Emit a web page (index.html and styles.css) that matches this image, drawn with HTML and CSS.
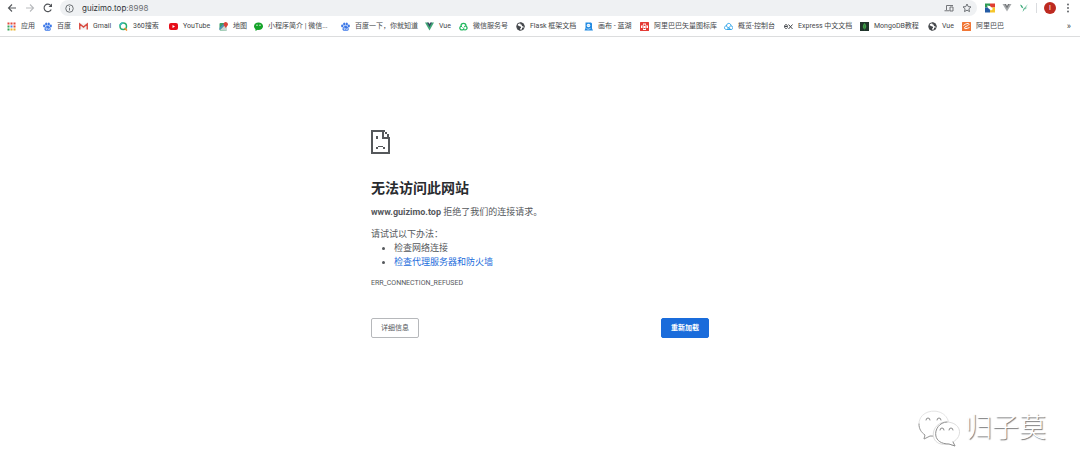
FILE: index.html
```html
<!DOCTYPE html>
<html lang="zh-CN">
<head>
<meta charset="utf-8">
<title>guizimo.top</title>
<link rel="stylesheet" href="styles.css">
</head>
<body>
<svg class="defs" aria-hidden="true">
  <symbol id="paw" viewBox="0 0 18 18"><g fill="#3c78e8"><ellipse cx="6.500" cy="4" rx="2.300" ry="3.200"/><ellipse cx="11.500" cy="4" rx="2.300" ry="3.200"/><ellipse cx="2.500" cy="8" rx="2.300" ry="2.800"/><ellipse cx="15.500" cy="8" rx="2.300" ry="2.800"/><path d="M9 7c2 0 3.500 2 5.500 4.500s1 6-2 6c-2 0-4-.5-6 0-3 .5-5-3.500-2.500-6S7 7 9 7z"/></g><path d="M6 12h2v3H6zM10 12v3h3v-3" fill="none" stroke="#fff"/></symbol>
  <symbol id="vue" viewBox="0 0 18 18"><path d="M0 1h5l4 7 4-7h5L9 17z" fill="#41a878"/><path d="M4 1h3.500L9 4l1.500-3H14L9 10z" fill="#34495e"/></symbol>
  <symbol id="globe" viewBox="0 0 18 18"><circle cx="9" cy="9" r="7.600" fill="#fff" stroke="#44474b" stroke-width="2"/><path d="M2 6c4 1 4 3 7 3 2 1 1 4-1 4l1 4C4 17 1 12 2 6zM8 1c1 3 0 4 3 4l1 3 5 2c0-5-4-9-9-9zM12 11l4 1-4 4z" fill="#44474b"/></symbol>
</svg>
<header class="browser">
  <div class="toolbar">
    <nav class="nav" aria-label="导航">
      <button class="tool" aria-label="后退"><svg viewBox="0 0 20 20"><path d="M18 10H3M10 3l-7 7 7 7" fill="none" stroke="#55585c" stroke-width="2.200"/></svg></button>
      <button class="tool" aria-label="前进"><svg viewBox="0 0 20 20"><path d="M2 10h15M10 3l7 7-7 7" fill="none" stroke="#b9bbbe" stroke-width="2.200"/></svg></button>
      <button class="tool" aria-label="刷新"><svg viewBox="0 0 20 20"><path d="M16.500 13A7.500 7.500 0 1 1 15.500 5" fill="none" stroke="#505357" stroke-width="2.200"/><path d="M18 1v7h-7z" fill="#505357"/></svg></button>
    </nav>
    <div class="omnibox">
      <svg class="info" viewBox="0 0 18 18"><circle cx="9" cy="9" r="7.500" fill="none" stroke="#5f6368" stroke-width="1.800"/><path d="M9 8v5M9 4.500v2" stroke="#5f6368" stroke-width="1.800"/></svg>
      <div class="url">guizimo.top<span class="port">:8998</span></div>
      <button class="tool" aria-label="发送到设备"><svg viewBox="0 0 20 20"><path d="M5 14V5h13M1 15.500h10M12 8h6v8h-6z" fill="none" stroke="#65686c" stroke-width="1.800"/></svg></button>
      <button class="tool" aria-label="收藏"><svg viewBox="0 0 20 20"><path d="M10 2l2.400 5.200 5.600.6-4.200 3.800 1.200 5.600-5-2.900-5 2.900 1.200-5.600L2 7.800l5.600-.6z" fill="none" stroke="#5f6368" stroke-width="1.800"/></svg></button>
    </div>
    <div class="extensions">
      <button class="tool" aria-label="扩展程序"><svg viewBox="0 0 20 20"><path d="M0 1h10v8H0z" fill="#2d9a52"/><path d="M10 1h10v8H10z" fill="#df3c32"/><path d="M0 9h10v10H0z" fill="#245ba5"/><path d="M10 9h10v10H10z" fill="#f5c52b"/><path d="M4 5l6 1 6 6-4 3-6-5z" fill="#fff"/></svg></button>
      <button class="tool" aria-label="Vue 工具"><svg viewBox="0 0 20 20"><path d="M1 2h5l4 7 4-7h5l-9 15z" fill="#a8abad"/><path d="M5 2h3l2 4 2-4h3l-5 9z" fill="#707376"/></svg></button>
      <button class="tool" aria-label="助手"><svg viewBox="0 0 20 20"><path d="M2 3l4 2 3 6-4-2zM18 2l-8 12-3 4 2-6z" fill="#35a675"/><path d="M11 10l6-1-5 4z" fill="#80caaa"/></svg></button>
      <span class="divider"></span>
      <button class="avatar" aria-label="账户">I</button>
      <button class="tool" aria-label="菜单"><svg viewBox="0 0 20 20"><g fill="#55585c"><circle cx="10" cy="3" r="1.800"/><circle cx="10" cy="10" r="1.800"/><circle cx="10" cy="17" r="1.800"/></g></svg></button>
    </div>
  </div>
  <nav class="bookmarks" aria-label="书签">
    <a class="bookmark" href="#"><svg viewBox="0 0 18 18"><path d="M1 1h4v4H1zM7 1h4v4H7zM13 1h4v4h-4z" fill="#e3483c"/><path d="M1 7h4v4H1z" fill="#3ba45a"/><path d="M7 7h4v4H7z" fill="#4485ee"/><path d="M13 7h4v4h-4z" fill="#e3483c"/><path d="M1 13h4v4H1z" fill="#3ba45a"/><path d="M7 13h4v4H7zM13 13h4v4h-4z" fill="#eab42c"/></svg>应用</a>
    <a class="bookmark" href="#"><svg><use href="#paw"/></svg>百度</a>
    <a class="bookmark" href="#"><svg viewBox="0 0 18 18"><path d="M1 3h16v12H1z" fill="#f1f1f1"/><path d="M1.500 15V4L9 10l7.500-6v11" fill="none" stroke="#d94a40" stroke-width="2.800"/></svg>Gmail</a>
    <a class="bookmark" href="#"><svg viewBox="0 0 18 18"><circle cx="8.500" cy="8.500" r="6.500" fill="none" stroke="#29ad70" stroke-width="3"/><path d="M2 8a6.500 6.500 0 0 1 6-6" fill="none" stroke="#40b9bd" stroke-width="3"/><path d="M11 12l5 5" stroke="#f28c28" stroke-width="3"/></svg>360搜索</a>
    <a class="bookmark" href="#"><svg viewBox="0 0 18 18"><rect y="2" width="18" height="14" rx="4" fill="#e60e19"/><path d="M7 6v6l5-3z" fill="#fff"/></svg>YouTube</a>
    <a class="bookmark" href="#"><svg viewBox="0 0 18 18"><rect x="1" y="2" width="15" height="15" rx="2" fill="#3a9d67"/><path d="M2 16L13 5l3 3v9z" fill="#c9d5d3"/><path d="M1 12l8-8 2 2L1 16z" fill="#548bc8"/><path d="M13 0c3 0 5 2 5 5 0 2-3 4-4.500 7C12 9 9 7 9 5c0-3 2-5 4-5z" fill="#db4439"/></svg>地图</a>
    <a class="bookmark" href="#"><svg viewBox="0 0 18 18"><ellipse cx="9" cy="8.500" rx="9" ry="7.500" fill="#14a329"/><path d="M3 13v5l5-3z" fill="#14a329"/><circle cx="6" cy="6.500" r="1.300" fill="#fff"/><circle cx="12" cy="6.500" r="1.300" fill="#fff"/></svg>小程序简介 | 微信...</a>
    <a class="bookmark" href="#"><svg><use href="#paw"/></svg>百度一下，你就知道</a>
    <a class="bookmark" href="#"><svg><use href="#vue"/></svg>Vue</a>
    <a class="bookmark" href="#"><svg viewBox="0 0 18 18"><path d="M4 8c0-7 10-7 10 0M14 8c5 5 0 9-5 7M9 15c-6 3-10-3-5-7" fill="none" stroke="#24b860" stroke-width="2.500"/><path d="M4 8l3 3M14 8l-4 1M9 15l1-4" stroke="#24b860" stroke-width="2"/></svg>微信服务号</a>
    <a class="bookmark" href="#"><svg><use href="#globe"/></svg>Flask 框架文档</a>
    <a class="bookmark" href="#"><svg viewBox="0 0 18 18"><path d="M3 1h11l2 2v10l2 4H1l2-5z" fill="#238be2"/><circle cx="9" cy="7" r="3.500" fill="#fff"/><path d="M7 7h4M5 13c3 2 6 2 8-1" fill="none" stroke="#b6dcfa" stroke-width="2"/></svg>画布 - 蓝湖</a>
    <a class="bookmark" href="#"><svg viewBox="0 0 18 18"><rect width="18" height="18" rx="1" fill="#e43b36"/><path d="M6 3h6v4h4v5h-4v4H6v-4H2V7h4z" fill="#fff"/><path d="M7 5h4v3H7zM4 9h3v2H4zM11 9h3v2h-3zM7 12h4v2H7z" fill="#e43b36"/></svg>阿里巴巴矢量图标库</a>
    <a class="bookmark" href="#"><svg viewBox="0 0 18 18"><path d="M5 15C-1 15 0 7 5 8c0-7 9-7 9 0 5 0 5 7 0 7zM5 9l8 5M7 14l6-6" fill="none" stroke="#32a5e9" stroke-width="2"/></svg>概览-控制台</a>
    <a class="bookmark" href="#"><svg viewBox="0 0 18 18"><path d="M1 9h6c0-5-6-5-6 0s5 5 6 2M9 5l8 9M17 5l-8 9" fill="none" stroke="#44474b" stroke-width="2"/></svg>Express 中文文档</a>
    <a class="bookmark" href="#"><svg viewBox="0 0 18 18"><path d="M0 0h18v18H0z" fill="#20342b"/><path d="M9 2c6 6 3 11 0 13-4-3-5-7 0-13z" fill="#3f9d46"/><path d="M9 6v11" stroke="#276c35"/></svg>MongoDB教程</a>
    <a class="bookmark" href="#"><svg><use href="#globe"/></svg>Vue</a>
    <a class="bookmark" href="#"><svg viewBox="0 0 18 18"><rect width="18" height="18" rx="1" fill="#f17736"/><path d="M3 7c5-5 12-5 11-2-1 2-5 3-8 5-3 3 0 5 9 1" fill="none" stroke="#fff" stroke-width="2"/></svg>阿里巴巴</a>
    <button class="more" aria-label="更多书签">»</button>
  </nav>
</header>
<main class="error">
  <svg class="sad" viewBox="0 0 19 24" shape-rendering="crispEdges"><path d="M0 0h14v2H2v20h15V9h-6V2h2v5h6v17H0zM14 2h2v2h-2zM16 4h2v3h-2zM5 6h2v3H5zM7 16h5v1H7zM5 17h2v2H5zM12 17h2v2h-2z" fill="#55585b"/></svg>
  <h1 class="title">无法访问此网站</h1>
  <p class="summary"><strong>www.guizimo.top</strong> 拒绝了我们的连接请求。</p>
  <p class="hint">请试试以下办法：</p>
  <ul class="suggestions">
    <li>检查网络连接</li>
    <li><a class="link" href="#">检查代理服务器和防火墙</a></li>
  </ul>
  <p class="code">ERR_CONNECTION_REFUSED</p>
  <div class="actions">
    <button class="button">详细信息</button>
    <button class="button primary">重新加载</button>
  </div>
</main>
<div class="watermark">
  <svg viewBox="0 0 44 38"><g fill="#fff" stroke-linecap="round"><path d="M8 26l-1 4 6-3c16 2 19-5 19-10C32-3 2-2 2 15c0 5 2 8 6 11z" stroke="#e4e4e4"/><path d="M2 15c0 5 2 8 6 11l-1 4 6-3h5" stroke="#999"/><path d="M36 33l2 4-6-2c-22 4-19-22-3-22 15 0 18 14 7 20z" stroke="#dedede"/><path d="M30 13c-13 0-18 22 2 22l6 2-2-4" stroke="#8f8f8f"/><path d="M9 11a2 2 0 0 1 4 0M20 11a2 2 0 0 1 4 0M23 21a2 2 0 0 1 4 0M32 21a2 2 0 0 1 4 0" fill="none" stroke="#888"/></g></svg>
  <span>归子莫</span>
</div>
</body>
</html>
```

FILE: styles.css
```css
* { box-sizing: border-box; }
body {
  margin: 0;
  min-height: 100vh;
  background: #fff;
  color: #55585c;
  font-family: Roboto, "Noto Sans CJK SC", sans-serif;
  font-size: 8px;
}
button { margin: 0; padding: 0; border: 0; background: none; color: inherit; font: inherit; }
h1, p, ul { margin: 0; padding: 0; }
a { color: inherit; text-decoration: none; }
svg { display: block; flex: none; }
.defs { position: absolute; width: 0; height: 0; }
.browser { border-bottom: 1px solid #dcddde; }
.toolbar { display: flex; align-items: center; height: 16px; padding: 0 7px; }
.nav { display: flex; gap: 8px; padding-right: 7px; }
.tool { width: 10px; height: 10px; }
.tool svg { width: 10px; height: 10px; }
.omnibox {
  display: flex;
  flex: 1;
  align-items: center;
  gap: 8px;
  height: 16px;
  padding: 0 5px;
  border-radius: 8px;
  background: #eff1f3;
}
.info { width: 9px; height: 9px; }
.url { flex: 1; color: #303236; font-family: Inter, sans-serif; line-height: 16px; }
.port { color: #6b6e72; }
.extensions { display: flex; align-items: center; gap: 7px; padding-left: 8px; }
.divider { width: 1px; height: 10px; background: #dadcdf; }
.avatar { width: 12px; height: 12px; border-radius: 50%; background: #bd2a20; color: #fff; font-size: 7px; line-height: 12px; text-align: center; }
.bookmarks {
  display: grid;
  grid-template-columns: 36px 36px 40px 50px 50px 35px 87px 84px 34px 57px 68px 56px 84px 60px 76px 68px 34px 1fr auto;
  align-items: center;
  height: 20px;
  padding: 0 9px 0 7px;
  color: #44474a;
  font-size: 7px;
}
.bookmark { display: flex; align-items: center; gap: 5px; line-height: 12px; white-space: nowrap; }
.bookmark svg { width: 9px; height: 9px; }
.more { font-size: 9px; }
.error { width: 100%; max-width: 338px; margin: 0 auto; padding-top: 93px; font-size: 9px; line-height: 14px; }
.sad { width: 19px; height: 24px; }
.title { margin-top: 24px; color: #292b2e; font-size: 14px; font-weight: 700; line-height: 20px; }
.summary { margin-top: 7px; }
.hint { margin-top: 8px; }
.suggestions { padding-left: 23px; }
.link { color: #1a6cdb; }
.code { margin-top: 7px; font-size: 7px; }
.actions { display: flex; justify-content: space-between; margin-top: 28px; }
.button { height: 20px; padding: 0 9px; border: 1px solid #b6b8bb; border-radius: 2px; font-size: 7px; }
.primary { border-color: #1a6cdb; background: #1a6cdb; color: #fff; font-weight: 700; }
.watermark {
  position: absolute;
  right: 34px;
  bottom: 26px;
  display: flex;
  align-items: center;
  gap: 4px;
  color: #fff;
  font-size: 27px;
  font-weight: 300;
  line-height: 40px;
  text-shadow: 1px 1px 1px #777;
}
.watermark svg { width: 44px; height: 38px; }
```
